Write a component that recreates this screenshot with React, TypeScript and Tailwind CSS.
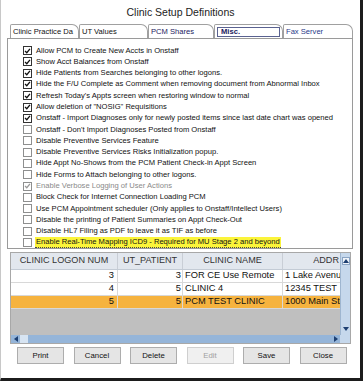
import React from "react";

const items: { label: string; checked: boolean; disabled?: boolean; highlight?: boolean }[] = [
  { label: "Allow PCM to Create New Accts in Onstaff", checked: true },
  { label: "Show Acct Balances from Onstaff", checked: true },
  { label: "Hide Patients from Searches belonging to other logons.", checked: true },
  { label: "Hide the F/U Complete as Comment when removing document from Abnormal Inbox", checked: true },
  { label: "Refresh Today's Appts screen when restoring window to normal", checked: true },
  { label: 'Allow deletion of "NOSIG" Requisitions', checked: true },
  { label: "Onstaff - Import Diagnoses only for newly posted items since last date chart was opened", checked: true },
  { label: "Onstaff - Don't Import Diagnoses Posted from Onstaff", checked: false },
  { label: "Disable Preventive Services Feature", checked: false },
  { label: "Disable Preventive Services Risks Initialization popup.", checked: false },
  { label: "Hide Appt No-Shows from the PCM Patient Check-in Appt Screen", checked: false },
  { label: "Hide Forms to Attach belonging to other logons.", checked: false },
  { label: "Enable Verbose Logging of User Actions", checked: true, disabled: true },
  { label: "Block Check for Internet Connection Loading PCM", checked: false },
  { label: "Use PCM Appointment scheduler (Only applies to Onstaff/Intellect Users)", checked: false },
  { label: "Disable the printing of Patient Summaries on Appt Check-Out", checked: false },
  { label: "Disable HL7 Filing as PDF to leave it as TIF as before", checked: false },
  { label: "Enable Real-Time Mapping ICD9 - Required for MU Stage 2 and beyond", checked: false, highlight: true },
];

const rows = [
  { a: "3", b: "3", c: "FOR CE Use Remote", d: "1 Lake Avenu", sel: false },
  { a: "4", b: "5", c: "CLINIC 4", d: "12345 TEST", sel: false },
  { a: "5", b: "5", c: "PCM TEST CLINIC", d: "1000 Main St", sel: true },
];

function Box({ checked, disabled }: { checked: boolean; disabled?: boolean }) {
  return (
    <div
      className={
        "w-[9px] h-[9px] shrink-0 bg-white border flex items-center justify-center " +
        (checked && !disabled ? "border-[#333333]" : "border-[#8e8f8f]")
      }
    >
      {checked && (
        <svg width="8" height="8" viewBox="0 0 8 8">
          <path
            d="M1.2 4 L3.2 6 L6.8 1.6"
            fill="none"
            stroke={disabled ? "#9a9a9a" : "#111"}
            strokeWidth="1.5"
          />
        </svg>
      )}
    </div>
  );
}

function Tab({ label, w, selected, cls }: { label: string; w: string; selected?: boolean; cls?: string }) {
  return (
    <div className={"h-[14px] border-t border-l border-r border-[#a0a0a0] rounded-tr-[7px] rounded-tl-[2px] bg-white flex items-center px-[2px] " + w}>
      {selected ? (
        <div className="w-full h-[10px] border border-[#5a6290] flex items-center px-[3px] text-[7.6px] font-bold text-[#1c2260]">
          {label}
        </div>
      ) : (
        <span className={"text-[7.6px] whitespace-nowrap " + (cls ?? "text-[#111]")}>{label}</span>
      )}
    </div>
  );
}

function Btn({ label, disabled }: { label: string; disabled?: boolean }) {
  return (
    <div
      className={
        "w-[47px] h-[17px] flex items-center justify-center text-[7.8px] border " +
        (disabled ? "border-[#cfcfcf] bg-[#f0f0f0] text-[#a0a0a0]" : "border-[#adadad] bg-[#e5e5e5] text-[#111]")
      }
    >
      {label}
    </div>
  );
}

export default function App() {
  return (
    <div
      className="w-[363px] h-[381px] bg-white border-l border-l-[#c8c8c8] border-r-[3px] border-r-[#1c1c1c] border-b-[3px] border-b-[#1c1c1c] flex flex-col overflow-hidden"
      style={{ fontFamily: '"Liberation Sans", Arial, sans-serif' }}
    >
      <div className="h-[24px] flex items-center justify-center text-[10.5px] text-[#222] pt-[1px]">
        Clinic Setup Definitions
      </div>

      <div className="ml-[6px] w-[346px] flex flex-col">
        <div className="flex items-end pl-[3px] h-[14px]">
          <Tab label="Clinic Practice Da" w="w-[69px]" />
          <Tab label="UT Values" w="w-[69px]" />
          <Tab label="PCM Shares" w="w-[66px]" cls="text-[#1c2260]" />
          <Tab label="Misc." w="w-[69px]" selected />
          <Tab label="Fax Server" w="w-[70px]" cls="text-[#2a3a8a]" />
        </div>
        <div className="h-[211px] border border-[#9a9a9a] bg-white pt-[6px] pl-[15px] flex flex-col">
          {items.map((it, i) => (
            <div key={i} className="h-[11.3px] flex items-center gap-[3px]">
              <Box checked={it.checked} disabled={it.disabled} />
              <span
                className={
                  "text-[7.6px] leading-[10px] whitespace-nowrap px-[1px] " +
                  (it.disabled ? "text-[#8a8a8a]" : "text-[#111]") +
                  (it.highlight ? " bg-[#fbf43a] border-b border-dotted border-[#444]" : "")
                }
              >
                {it.label}
              </span>
            </div>
          ))}
        </div>
      </div>

      <div className="ml-[9px] mt-[3px] w-[341px] h-[92px] border border-[#a8a8a8] flex flex-col bg-[#bfbfbf]">
        <div className="flex flex-1 min-h-0">
          <div className="flex-1 min-w-0 flex flex-col">
            <div className="h-[17px] flex bg-[#e2e7ee] text-[9.1px] text-[#333] border-b border-[#c3cbd5]">
              <div className="w-[107px] border-r border-[#c9ced6] flex items-center justify-center">CLINIC LOGON NUM</div>
              <div className="w-[65px] border-r border-[#c9ced6] flex items-center justify-center">UT_PATIENT</div>
              <div className="w-[100px] border-r border-[#c9ced6] flex items-center justify-center">CLINIC NAME</div>
              <div className="flex-1 min-w-0 flex items-center justify-end pr-[1px] whitespace-nowrap">ADDR</div>
            </div>
            {rows.map((r, i) => (
              <div
                key={i}
                className={
                  "h-[13px] flex text-[9.3px] text-[#111] border-b border-[#d8d8d8] " +
                  (r.sel ? "bg-[#f6b33f]" : "bg-white")
                }
              >
                <div className="w-[107px] border-r border-[#d8d8d8] flex items-center justify-end pr-[3px]">{r.a}</div>
                <div className="w-[65px] border-r border-[#d8d8d8] flex items-center justify-end pr-[1px]">{r.b}</div>
                <div className="w-[100px] border-r border-[#d8d8d8] flex items-center pl-[2px] whitespace-nowrap">{r.c}</div>
                <div className="flex-1 min-w-0 flex items-center pl-[2px] whitespace-nowrap">{r.d}</div>
              </div>
            ))}
          </div>
          <div className="w-[10px] bg-[#c6d8ec] border-l border-[#9fb6d0] flex flex-col justify-between items-center py-[4px]">
            <div className="w-[8px] h-[8px] bg-[#eef3f9] border border-[#8aa4c4] flex items-center justify-center">
              <svg width="6" height="4" viewBox="0 0 6 4"><path d="M0 4 L3 0 L6 4 Z" fill="#1d3f72" /></svg>
            </div>
            <svg width="6" height="4" viewBox="0 0 6 4"><path d="M0 0 L3 4 L6 0 Z" fill="#1d3f72" /></svg>
          </div>
        </div>
        <div className="h-[8px] flex bg-[#95b5d9]">
          <div className="w-[9px] flex items-center justify-center bg-[#95b5d9]">
            <svg width="4" height="6" viewBox="0 0 4 6"><path d="M4 0 L0 3 L4 6 Z" fill="#1d3f72" /></svg>
          </div>
          <div className="w-[8px] bg-[#d7e4f2]" />
          <div className="flex-1" />
          <div className="w-[9px] flex items-center justify-center">
            <svg width="4" height="6" viewBox="0 0 4 6"><path d="M0 0 L4 3 L0 6 Z" fill="#1d3f72" /></svg>
          </div>
          <div className="w-[10px] bg-[#c6d8ec]" />
        </div>
      </div>

      <div className="ml-[16px] mt-[3px] flex gap-[9.5px]">
        <Btn label="Print" />
        <Btn label="Cancel" />
        <Btn label="Delete" />
        <Btn label="Edit" disabled />
        <Btn label="Save" />
        <Btn label="Close" />
      </div>
    </div>
  );
}
